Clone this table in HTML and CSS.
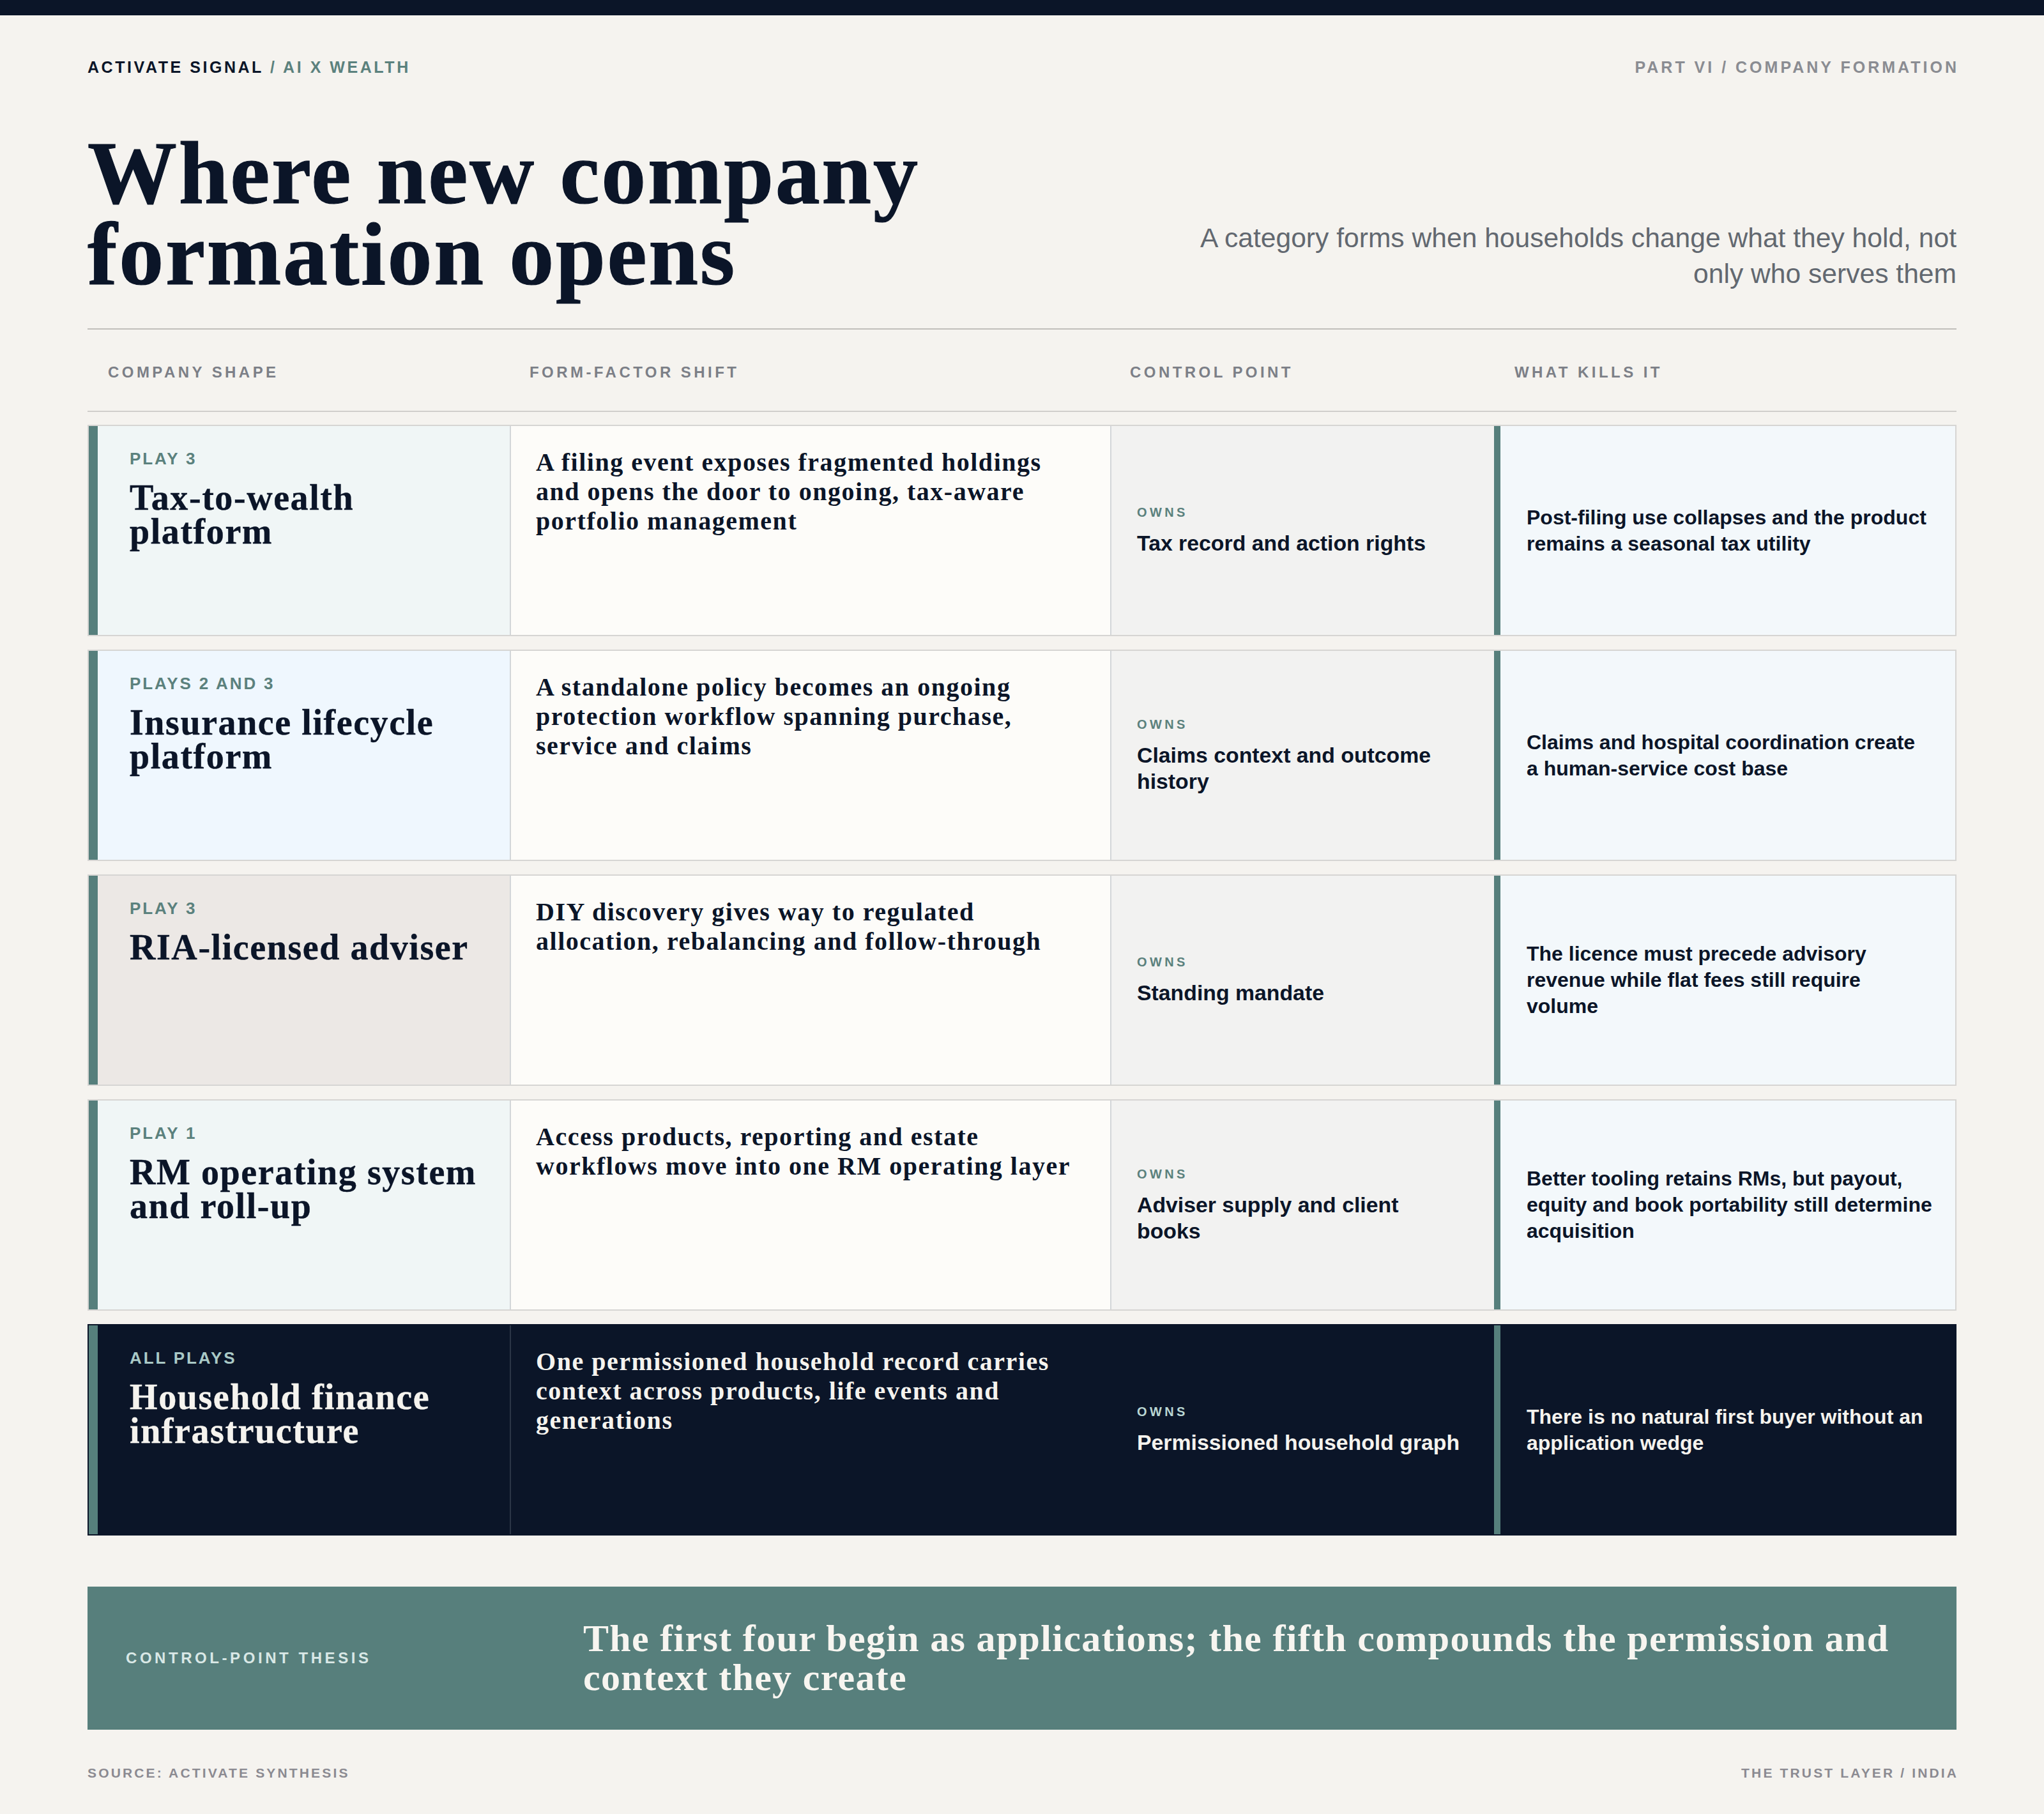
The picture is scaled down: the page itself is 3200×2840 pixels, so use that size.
FILE: index.html
```html
<!DOCTYPE html>
<html lang="en">
<head>
<meta charset="utf-8">
<title>Where new company formation opens</title>
<link rel="stylesheet" href="styles.css">
</head>
<body>
<div class="topbar"></div>
<main class="page">
  <header class="meta">
    <div class="kicker">ACTIVATE SIGNAL <span>/ AI X WEALTH</span></div>
    <div class="part">PART VI / COMPANY FORMATION</div>
  </header>

  <section class="hero">
    <h1>Where new company<br>formation opens</h1>
    <p class="dek">A category forms when households change what they hold, not<br>only who serves them</p>
  </section>

  <section class="table">
    <div class="thead">
      <div>COMPANY SHAPE</div>
      <div>FORM-FACTOR SHIFT</div>
      <div>CONTROL POINT</div>
      <div>WHAT KILLS IT</div>
    </div>

    <div class="rows">
      <article class="row">
        <div class="shape tint-mint">
          <div class="play">PLAY 3</div>
          <h2>Tax-to-wealth<br>platform</h2>
        </div>
        <div class="shift">A filing event exposes fragmented holdings<br>and opens the door to ongoing, tax-aware<br>portfolio management</div>
        <div class="control">
          <div class="owns">OWNS</div>
          <p>Tax record and action rights</p>
        </div>
        <div class="kills">Post-filing use collapses and the product<br>remains a seasonal tax utility</div>
      </article>

      <article class="row">
        <div class="shape tint-sky">
          <div class="play">PLAYS 2 AND 3</div>
          <h2>Insurance lifecycle<br>platform</h2>
        </div>
        <div class="shift">A standalone policy becomes an ongoing<br>protection workflow spanning purchase,<br>service and claims</div>
        <div class="control">
          <div class="owns">OWNS</div>
          <p>Claims context and outcome<br>history</p>
        </div>
        <div class="kills">Claims and hospital coordination create<br>a human-service cost base</div>
      </article>

      <article class="row">
        <div class="shape tint-stone">
          <div class="play">PLAY 3</div>
          <h2>RIA-licensed adviser</h2>
        </div>
        <div class="shift">DIY discovery gives way to regulated<br>allocation, rebalancing and follow-through</div>
        <div class="control">
          <div class="owns">OWNS</div>
          <p>Standing mandate</p>
        </div>
        <div class="kills">The licence must precede advisory<br>revenue while flat fees still require<br>volume</div>
      </article>

      <article class="row">
        <div class="shape tint-mint">
          <div class="play">PLAY 1</div>
          <h2>RM operating system<br>and roll-up</h2>
        </div>
        <div class="shift">Access products, reporting and estate<br>workflows move into one RM operating layer</div>
        <div class="control">
          <div class="owns">OWNS</div>
          <p>Adviser supply and client<br>books</p>
        </div>
        <div class="kills">Better tooling retains RMs, but payout,<br>equity and book portability still determine<br>acquisition</div>
      </article>

      <article class="row dark">
        <div class="shape">
          <div class="play">ALL PLAYS</div>
          <h2>Household finance<br>infrastructure</h2>
        </div>
        <div class="shift">One permissioned household record carries<br>context across products, life events and<br>generations</div>
        <div class="control">
          <div class="owns">OWNS</div>
          <p>Permissioned household graph</p>
        </div>
        <div class="kills">There is no natural first buyer without an<br>application wedge</div>
      </article>
    </div>
  </section>

  <section class="thesis">
    <div class="thesis-label">CONTROL-POINT THESIS</div>
    <p>The first four begin as applications; the fifth compounds the permission and<br>context they create</p>
  </section>

  <footer class="foot">
    <div>SOURCE: ACTIVATE SYNTHESIS</div>
    <div class="foot-right">THE TRUST LAYER / INDIA</div>
  </footer>
</main>
</body>
</html>
```

FILE: styles.css
```css
* {
  box-sizing: border-box;
  margin: 0;
  padding: 0;
}

body {
  background: #f5f3ef;
  color: #0b1528;
  font-family: "Liberation Sans", Arial, sans-serif;
}

.topbar {
  height: 24px;
  background: #0b1528;
}

.page {
  padding: 66px 137px 0;
}

/* ---------- meta line ---------- */
.meta {
  display: flex;
  justify-content: space-between;
  font-size: 25px;
  line-height: 30px;
  font-weight: 700;
}

.kicker {
  color: #0b1528;
  letter-spacing: 0.142em;
}

.kicker span {
  color: #5b817d;
}

.part {
  color: #8a8c92;
  letter-spacing: 0.16em;
  margin-right: -0.16em;
}

/* ---------- hero ---------- */
.hero {
  display: flex;
  justify-content: space-between;
  align-items: flex-end;
  margin-top: 87px;
}

.hero h1 {
  font-family: "Liberation Serif", "Times New Roman", serif;
  font-weight: 700;
  font-size: 140px;
  line-height: 127px;
  letter-spacing: 0.019em;
  color: #0b1528;
  -webkit-text-stroke: 1.2px #0b1528;
}

.dek {
  font-size: 42.6px;
  line-height: 56px;
  color: #626870;
  text-align: right;
  margin-bottom: 5px;
}

/* ---------- table ---------- */
.table {
  margin-top: 53px;
  border-top: 2px solid #c0beba;
}

.thead {
  display: grid;
  grid-template-columns: 660px 940px 602px 1fr;
  padding: 52px 0 45px;
  border-bottom: 2px solid #d0cecb;
  font-size: 24px;
  line-height: 30px;
  font-weight: 700;
  letter-spacing: 0.185em;
  color: #7c7f87;
}

.thead div {
  padding-left: 32px;
}

.rows {
  display: flex;
  flex-direction: column;
  gap: 21px;
  margin-top: 20px;
}

.row {
  display: grid;
  grid-template-columns: 659px 940px 601px 1fr;
  height: 331px;
  border: 2px solid #d6d5d3;
}

.shape {
  border-left: 14px solid #567f7c;
  padding: 36px 30px 0 50px;
}

.tint-mint {
  background: #f0f6f6;
}

.tint-sky {
  background: #eff7fe;
}

.tint-stone {
  background: #ece8e5;
}

.play {
  font-size: 26px;
  line-height: 30px;
  font-weight: 700;
  letter-spacing: 0.11em;
  color: #5b817d;
}

.shape h2 {
  margin-top: 20px;
  font-family: "Liberation Serif", "Times New Roman", serif;
  font-weight: 700;
  font-size: 56px;
  line-height: 53px;
  letter-spacing: 0.028em;
  color: #0b1528;
  -webkit-text-stroke: 0.4px currentColor;
}

.shift {
  border-left: 2px solid #d3d6d9;
  background: #fdfcf9;
  padding: 34px 30px 0 39px;
  font-family: "Liberation Serif", "Times New Roman", serif;
  font-weight: 700;
  font-size: 40px;
  line-height: 46px;
  letter-spacing: 0.038em;
  color: #0b1528;
}

.control {
  border-left: 2px solid #d3d6d9;
  background: #f2f2f1;
  padding: 0 24px 0 40px;
  display: flex;
  flex-direction: column;
  justify-content: center;
}

.owns {
  font-size: 20px;
  line-height: 24px;
  font-weight: 700;
  letter-spacing: 0.22em;
  color: #5b817d;
}

.control p {
  margin-top: 16px;
  font-size: 33.8px;
  line-height: 41px;
  font-weight: 700;
  color: #0b1528;
}

.kills {
  border-left: 10px solid #567f7c;
  background: #f3f8fb;
  padding: 0 24px 0 41px;
  display: flex;
  align-items: center;
  font-size: 32px;
  line-height: 41px;
  font-weight: 700;
  color: #0b1528;
}

/* dark row */
.row.dark {
  background: #0b1528;
  border-color: #0b1528;
}

.dark .shape,
.dark .shift,
.dark .control,
.dark .kills {
  background: #0b1528;
}

.dark .shift {
  border-left-color: #2b3546;
}

.dark .control {
  border-left-color: #0b1528;
}

.dark h2,
.dark .shift,
.dark .control p,
.dark .kills {
  color: #f5f3ee;
}

.dark .play {
  color: #a9c9c6;
}

.dark .owns {
  color: #b9d6d3;
}

/* ---------- thesis ---------- */
.thesis {
  margin-top: 80px;
  height: 224px;
  background: #577f7c;
  display: grid;
  grid-template-columns: 716px 1fr;
  align-items: center;
  padding: 0 60px;
}

.thesis-label {
  font-size: 24px;
  line-height: 30px;
  font-weight: 700;
  letter-spacing: 0.19em;
  color: #d9e8e6;
}

.thesis p {
  font-family: "Liberation Serif", "Times New Roman", serif;
  font-weight: 700;
  font-size: 60px;
  line-height: 61px;
  letter-spacing: 0.022em;
  color: #f7f5f0;
}

/* ---------- footer ---------- */
.foot {
  display: flex;
  justify-content: space-between;
  margin-top: 55px;
  font-size: 21px;
  line-height: 26px;
  font-weight: 700;
  letter-spacing: 0.15em;
  color: #8b8a91;
}

.foot-right {
  margin-right: -0.15em;
}
```
